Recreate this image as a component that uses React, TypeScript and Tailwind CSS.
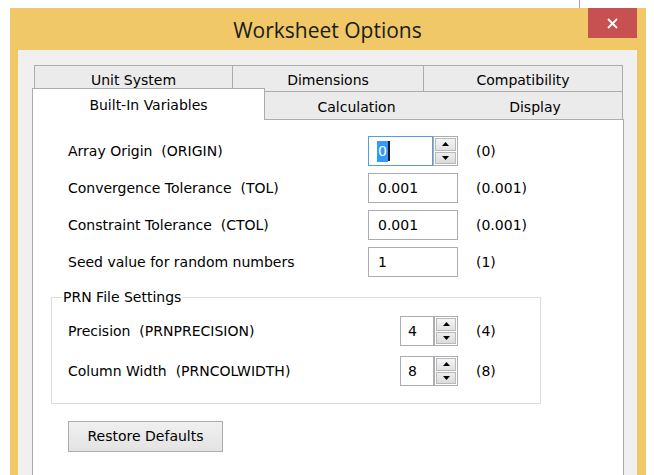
import React from 'react'

const uiFont = { fontFamily: '"DejaVu Sans", Verdana, sans-serif' }

function Arrow({ dir }: { dir: 'up' | 'down' }) {
  return (
    <svg width="7" height="4" viewBox="0 0 7 4">
      {dir === 'up' ? <path d="M3.5 0 L7 4 L0 4 Z" fill="#000" /> : <path d="M0 0 L7 0 L3.5 4 Z" fill="#000" />}
    </svg>
  )
}

function Spinner({ width }: { width: string }) {
  return (
    <div className={`${width} flex h-full flex-col gap-px border border-[#ABADB3] bg-white p-px`}>
      <div className="flex flex-1 items-center justify-center border border-[#B9B9B9] bg-gradient-to-b from-[#F4F4F4] to-[#E2E2E2]">
        <Arrow dir="up" />
      </div>
      <div className="flex flex-1 items-center justify-center border border-[#B9B9B9] bg-gradient-to-b from-[#EDEDED] to-[#DCDCDC]">
        <Arrow dir="down" />
      </div>
    </div>
  )
}

function TextBox({ value }: { value: string }) {
  return (
    <div className="flex h-[30px] w-[90px] items-center border border-[#ABADB3] bg-white pl-[9px] text-[14px] text-black">
      {value}
    </div>
  )
}

export default function App() {
  const rows = [
    { label: 'Convergence Tolerance  (TOL)', value: '0.001', def: '(0.001)' },
    { label: 'Constraint Tolerance  (CTOL)', value: '0.001', def: '(0.001)' },
    { label: 'Seed value for random numbers', value: '1', def: '(1)' },
  ]

  const prnRows = [
    { label: 'Precision  (PRNPRECISION)', value: '4', def: '(4)' },
    { label: 'Column Width  (PRNCOLWIDTH)', value: '8', def: '(8)' },
  ]

  return (
    <div className="h-[475px] w-[654px] overflow-hidden bg-white" style={uiFont}>
      {/* edge of the window behind */}
      <div className="flex h-2">
        <div className="ml-[579px] w-px bg-[#A3A3A3]" />
      </div>

      <div className="ml-[10px] flex h-[467px] w-[636px] flex-col bg-[#F0C868] pl-2 pr-[9px]">
        {/* Title bar */}
        <div className="flex h-[42px] shrink-0 items-start">
          <div
            className="flex-1 pl-[49px] pt-[8px] text-center text-[21px] leading-[28px] text-[#1b1b1b]"
            style={{ fontFamily: '"Open Sans", "Noto Sans", sans-serif' }}
          >
            Worksheet Options
          </div>
          <div className="flex h-[30px] w-[49px] items-center justify-center bg-[#C75050]">
            <svg width="11" height="11" viewBox="0 0 11 11">
              <path d="M1 1 L10 10 M10 1 L1 10" stroke="#fff" strokeWidth="1.8" />
            </svg>
          </div>
        </div>

        {/* Client area */}
        <div className="flex flex-1 flex-col bg-[#F0F0F0] pl-[14px] pr-[13px] pt-[15px] text-[14px] text-black">
          {/* Tabs back row */}
          <div className="ml-[2px] flex h-[26px] shrink-0">
            <div className="flex w-[198px] justify-center border-l border-t border-[#ACACAC] bg-[#EBEBEB] pt-[4px]">
              Unit System
            </div>
            <div className="flex w-[191px] justify-center border-l border-t border-[#ACACAC] bg-[#EBEBEB] pt-[4px]">
              Dimensions
            </div>
            <div className="flex w-[200px] justify-center border-x border-t border-[#ACACAC] bg-[#EBEBEB] pt-[4px]">
              Compatibility
            </div>
          </div>

          {/* Tabs front row */}
          <div className="flex h-[28px] shrink-0 items-start">
            <div className="relative z-10 -mt-[3px] flex h-[32px] w-[233px] justify-center border-x border-t border-[#ACACAC] bg-white pt-[6px]">
              Built-In Variables
            </div>
            <div className="-ml-px flex h-[28px] w-[185px] justify-center border-x border-t border-[#ACACAC] bg-[#EBEBEB] pt-[5px]">
              Calculation
            </div>
            <div className="-ml-px flex h-[28px] w-[175px] justify-center border-r border-t border-[#ACACAC] bg-[#EBEBEB] pt-[5px]">
              Display
            </div>
          </div>

          {/* Tab page */}
          <div className="flex flex-1 flex-col border-x border-t border-[#ACACAC] bg-white pl-[18px] pt-[16px]">
            <div className="grid grid-cols-[300px_90px_auto] gap-y-[7px] pl-[17px]">
              <div className="flex h-[30px] items-center whitespace-pre">Array Origin  (ORIGIN)</div>
              <div className="flex h-[30px]">
                <div className="flex w-[65px] items-center border border-[#569DE5] bg-white pl-[8px]">
                  <span className="bg-[#3399FF] px-px text-white">0</span>
                  <span className="h-[20px] w-[2px] bg-[#1a1a1a]" />
                </div>
                <Spinner width="w-[25px]" />
              </div>
              <div className="ml-[18px] flex h-[30px] items-center">(0)</div>

              {rows.map((r) => (
                <React.Fragment key={r.label}>
                  <div className="flex h-[30px] items-center whitespace-pre">{r.label}</div>
                  <TextBox value={r.value} />
                  <div className="ml-[18px] flex h-[30px] items-center">{r.def}</div>
                </React.Fragment>
              ))}
            </div>

            <fieldset className="mt-[12px] w-[490px] border border-[#DCDCDC] pb-[17px] pl-[10px]">
              <legend className="px-px leading-[17px]">PRN File Settings</legend>
              <div className="mt-[10px] grid grid-cols-[332px_58px_auto] gap-y-[10px] pl-[6px]">
                {prnRows.map((r) => (
                  <React.Fragment key={r.label}>
                    <div className="flex h-[30px] items-center whitespace-pre">{r.label}</div>
                    <div className="flex h-[30px]">
                      <div className="flex w-[34px] items-center border border-[#ABADB3] bg-white pl-[7px]">{r.value}</div>
                      <Spinner width="w-[24px]" />
                    </div>
                    <div className="ml-[18px] flex h-[30px] items-center">{r.def}</div>
                  </React.Fragment>
                ))}
              </div>
            </fieldset>

            <div className="mt-[17px] flex pl-[17px]">
              <button className="h-[31px] w-[155px] border border-[#ACACAC] bg-gradient-to-b from-[#F0F0F0] to-[#E3E3E3] text-[14px] text-black">
                Restore Defaults
              </button>
            </div>
          </div>
        </div>
      </div>
    </div>
  )
}
